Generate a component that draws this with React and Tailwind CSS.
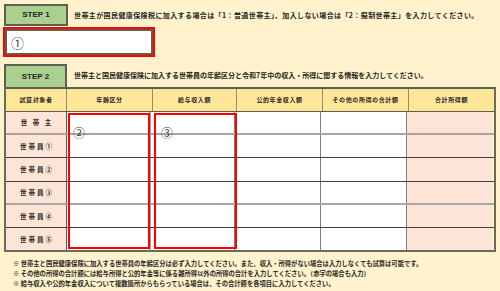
import React from "react";

const jp = { fontFamily: '"Noto Sans CJK JP", "Noto Sans", sans-serif' };

function Cell({ w, className = "", children }) {
  return (
    <div className={`flex shrink-0 items-center justify-center ${w} ${className}`}>
      {children}
    </div>
  );
}

const rows = [
  { label: "世 帯 主", border: "border-b-2 border-b-[#a6a6a6]", h: "h-[23px]" },
  { label: "世帯員①", border: "border-b border-b-[#404040]", h: "h-[23px]" },
  { label: "世帯員②", border: "border-b border-b-[#404040]", h: "h-[24px]" },
  { label: "世帯員③", border: "border-b-2 border-b-[#a6a6a6]", h: "h-[23px]" },
  { label: "世帯員④", border: "border-b border-b-[#404040]", h: "h-[23px]" },
  { label: "世帯員⑤", border: "", h: "h-[22px]" },
];

export default function App() {
  return (
    <div
      className="w-[500px] h-[291px] overflow-hidden bg-[#FFF2CC] text-[#262626] pt-[4px]"
      style={jp}
    >
      {/* STEP 1 */}
      <div className="flex items-center h-[22px]">
        <div className="ml-[4px] w-[64px] h-[22px] bg-[#A9D08E] border-2 border-[#5f5f4f] flex items-center justify-center">
          <span
            className="text-[8px] font-bold leading-none"
            style={{ fontFamily: '"Liberation Sans", Arial, sans-serif' }}
          >
            STEP 1
          </span>
        </div>
        <div className="ml-[6px] text-[7px] font-bold leading-none whitespace-nowrap tracking-[0.4px]">
          世帯主が国民健康保険税に加入する場合は「1：普通世帯主」、加入しない場合は「2：擬制世帯主」を入力してください。
        </div>
      </div>

      {/* STEP 1 input */}
      <div className="ml-[3px] mt-[1px] w-[152px] h-[30px] border-2 border-[#ff0000]">
        <div className="h-full border-2 border-[#5f5f4f] bg-white flex items-center pl-[4px]">
          <span className="text-[13px] leading-none text-[#404040]">①</span>
        </div>
      </div>

      {/* STEP 2 */}
      <div className="flex items-center mt-[7px] h-[23px]">
        <div className="ml-[4px] w-[63px] h-[23px] bg-[#A9D08E] border-x-2 border-t-2 border-[#5f5f4f] flex items-center justify-center">
          <span
            className="text-[8px] font-bold leading-none"
            style={{ fontFamily: '"Liberation Sans", Arial, sans-serif' }}
          >
            STEP 2
          </span>
        </div>
        <div className="ml-[7px] text-[7px] font-bold leading-none whitespace-nowrap">
          世帯主と国民健康保険に加入する世帯員の年齢区分と令和7年中の収入・所得に関する情報を入力してください。
        </div>
      </div>

      {/* Table */}
      <div className="relative ml-[4px] w-[492px] border-x-2 border-b-2 border-[#6b6b5b]">
        {/* header */}
        <div className="flex h-[25px] border-t-2 border-b border-[#5f5f4f] bg-[#FFE699] text-[6px] font-bold leading-none tracking-[0.6px]">
          <Cell w="w-[61px]" className="border-r border-[#8f8f6f]">試算対象者</Cell>
          <Cell w="w-[86px]" className="border-r border-[#8f8f6f]">年齢区分</Cell>
          <Cell w="w-[84px]" className="border-r border-[#8f8f6f]">給与収入額</Cell>
          <Cell w="w-[86px]" className="border-r border-[#8f8f6f]">公的年金収入額</Cell>
          <Cell w="w-[86px]" className="border-r border-[#8f8f6f]">その他の所得の合計額</Cell>
          <Cell w="w-[85px]">合計所得額</Cell>
        </div>
        {rows.map((r) => (
          <div key={r.label} className={`flex ${r.h} ${r.border}`}>
            <Cell
              w="w-[61px]"
              className="bg-[#FCE4D6] border-r border-[#595959] text-[6.5px] font-bold leading-none tracking-[2px]"
            >
              <span className="pl-[2px]">{r.label}</span>
            </Cell>
            <Cell w="w-[84px]" className="bg-white border-r-2 border-[#a6a6a6]" />
            <Cell w="w-[84px]" className="bg-white border-r border-[#808080]" />
            <Cell w="w-[86px]" className="bg-white border-r border-[#808080]" />
            <Cell w="w-[86px]" className="bg-white border-r border-[#808080]" />
            <Cell w="w-[85px]" className="bg-[#FCE4D6]" />
          </div>
        ))}

        {/* highlighted input columns */}
        <div className="absolute left-[62px] top-[26px] w-[82px] h-[136px] border-2 border-[#ff0000] pl-[3px] pt-[4px]">
          <span className="text-[12px] leading-none text-[#404040]">②</span>
        </div>
        <div className="absolute left-[148px] top-[26px] w-[83px] h-[136px] border-2 border-[#ff0000] pl-[5px] pt-[4px]">
          <span className="text-[12px] leading-none text-[#404040]">③</span>
        </div>
      </div>

      {/* notes */}
      <div className="ml-[13px] mt-[7px] text-[6.3px] font-bold leading-[10px] whitespace-nowrap">
        <div>※ 世帯主と国民健康保険に加入する世帯員の年齢区分は必ず入力してください。また、収入・所得がない場合は入力しなくても試算は可能です。</div>
        <div>※ その他の所得の合計額には給与所得と公的年金等に係る雑所得以外の所得の合計を入力してください。（赤字の場合も入力）</div>
        <div>※ 給与収入や公的年金収入について複数箇所からもらっている場合は、その合計額を各項目に入力してください。</div>
      </div>
    </div>
  );
}
